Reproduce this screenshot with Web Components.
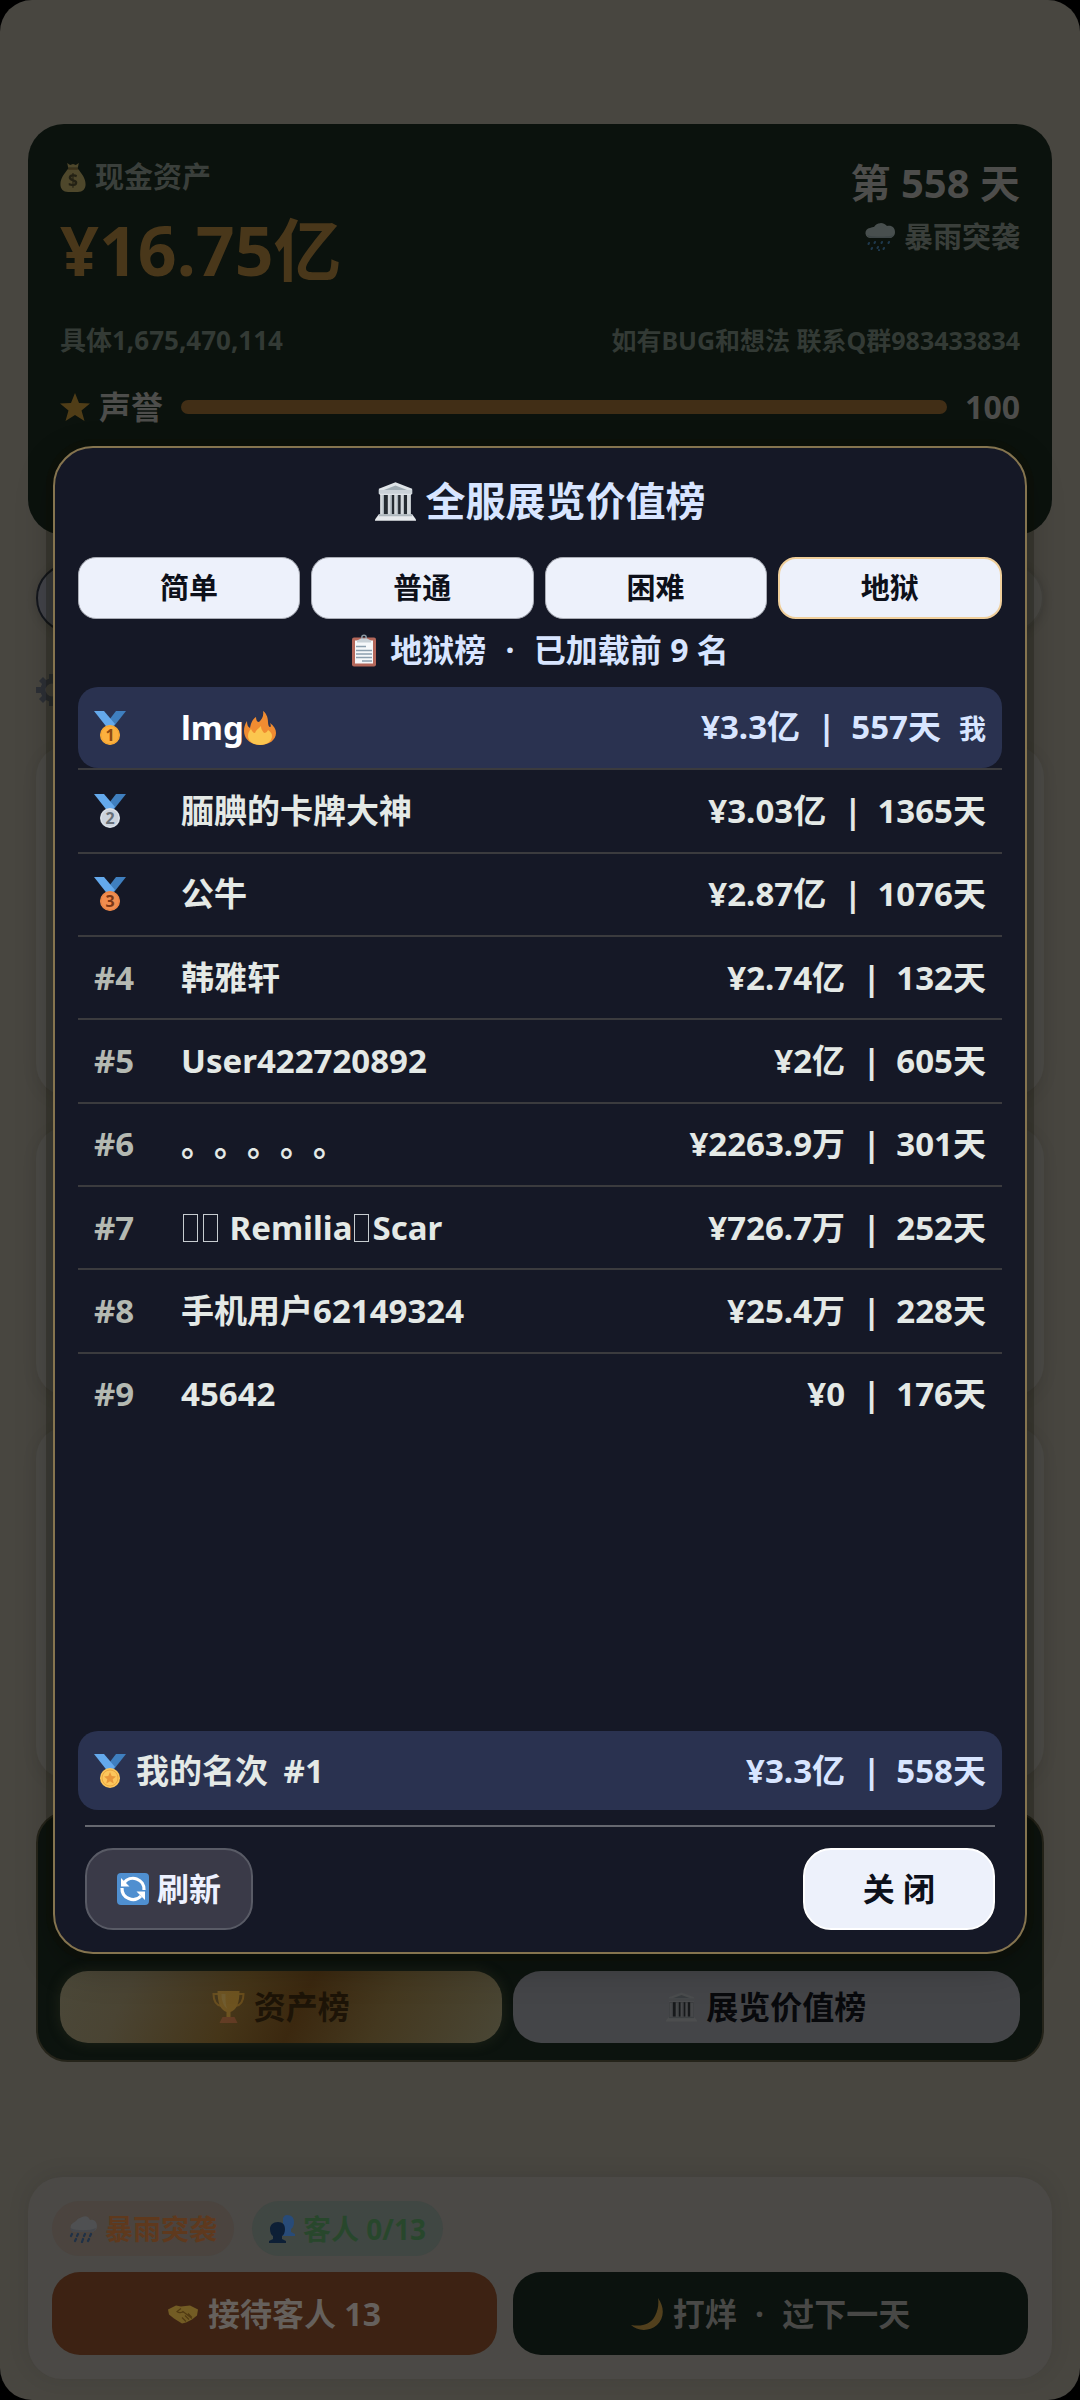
<!DOCTYPE html>
<html lang="zh-CN">
<head>
<meta charset="utf-8">
<meta name="viewport" content="width=device-width, initial-scale=1">
<title>全服展览价值榜</title>
<style>
  html { background: #000; }
  body { margin: 0; font-family: "Noto Sans", "Noto Sans CJK SC", sans-serif; font-weight: 700; text-spacing-trim: space-all; }
</style>
</head>
<body>
<game-app></game-app>

<script>
const MEDAL_RIBBON = `
  <path d="M32 0H22L12 13l5 6z" fill="#3f7fbf"/><path d="M0 0h10l11 13-6 6z" fill="#64a9ec"/>`;
const medal = (disc, rim, ink, n) => `<svg viewBox="0 0 32 34">${MEDAL_RIBBON}
  <circle cx="16" cy="24" r="10" fill="${disc}"/><circle cx="16" cy="24" r="9" fill="none" stroke="${rim}" stroke-width="1"/>
  <text x="16" y="30" text-anchor="middle" font-family="Noto Sans, sans-serif" font-weight="700" font-size="16" fill="${ink}">${n}</text></svg>`;

const ICONS = {
  gold: medal('#fbb03f', '#f7a42e', '#8d4a12', '1'),
  silver: medal('#ccd3dd', '#dfe4ea', '#687079', '2'),
  bronze: medal('#f18d4f', '#ea8243', '#7b3715', '3'),
  star_medal: `<svg viewBox="0 0 32 34">${MEDAL_RIBBON}<circle cx="16" cy="24" r="10" fill="#fcc65c"/><circle cx="16" cy="24" r="8" fill="none" stroke="#eba83f" stroke-width="1"/>
    <path d="M16 18l1.700 4 4.300.4-3.300 2.800 1 4.300-3.700-2.300-3.700 2.300 1-4.300-3.300-2.800 4.300-.4z" fill="#e8973a"/></svg>`,
  museum: `<svg viewBox="0 0 32 32"><path d="M16 1L3 6v4l1 1h24l1-1V6z" fill="#dfe4e8"/><path d="M16 3.500L7 7h18z" fill="#9fabb3"/><path d="M3 7h26v3H3z" fill="#cbd2d8"/>
    <path d="M4 11h24v16H4z" fill="#252b31"/><path d="M4 11h3v16H4zM10 11h3v16h-3zM15 11h3v16h-3zM20 11h2.500v16H20zM25 11h3v16h-3z" fill="#d3d8dc"/><path d="M6 11h1v16H6zM12 11h1v16h-1zM17 11h1v16h-1z" fill="#a8b1b8"/>
    <path d="M3 26h26l3 4v1H0v-1z" fill="#e6e9ec"/><path d="M3 26h26v1.500H3z" fill="#aeb7bd"/></svg>`,
  clipboard: `<svg viewBox="0 0 26 32"><rect x="1" y="3" width="24" height="29" rx="2" fill="#b4675a"/><path d="M4 6h18v23H4z" fill="#f6f8fa"/>
    <circle cx="13" cy="3" r="2.200" fill="none" stroke="#8a98a3" stroke-width="1.500"/><path d="M6 8V6l4-2h6l4 2v2z" fill="#c8d0d6"/>
    <path d="M5 12h10M5 16h16M5 19.500h16M5 23h16M11 26.500h10" stroke="#8c9fae" stroke-width="1.300"/></svg>`,
  fire: `<svg viewBox="0 0 32 34"><path d="M16 34C7 34 0 28 0 20c0-4 1-7 3-10 0 4 1 6 3 7C7 11 9 8 12 6c0 3 1 5 3 5 3-3 5-6 4-11 3 2 5 6 5 11 0 3 1 5 2 5 1 0 1-2 0-4 4 3 6 6 6 10 0 7-7 12-16 12z" fill="#f08c31"/>
    <path d="M16 34c-7 0-12-4-12-9 0-3 1-5 3-7 1 2 2 4 4 4 1-3 3-4 6-7 0 4 2 5 3 7 2 0 3-1 4-3 3 2 4 4 4 6 0 5-5 9-12 9z" fill="#fbc64f"/></svg>`,
  refresh: `<svg viewBox="0 0 32 32"><rect width="32" height="32" rx="4" fill="#4f8fd0"/><g fill="none" stroke="#fff" stroke-width="3.200"><path d="M7 10A11 11 0 0 1 27 17"/><path d="M5 15A11 11 0 0 0 24 23"/></g>
    <path d="M4 5v8.500h8.500zM28 27v-8.500h-8.500z" fill="#fff"/></svg>`,
  bag: `<svg viewBox="0 0 26 30"><path d="M7 0l3 2 3-1 3 1 3-2-1 5H8z" fill="#e8c070"/><path d="M8 6h10c4 5 8 10 8 16 0 5-3 8-8 8H8c-5 0-8-3-8-8C0 16 4 11 8 6z" fill="#e8c070"/><path d="M8 5h10v2H8z" fill="#a87838"/>
    <text x="13" y="25" text-anchor="middle" font-family="Noto Sans, sans-serif" font-size="18" fill="#5b4426">$</text></svg>`,
  rain: `<svg viewBox="0 0 30 28"><path d="M6 15a5 5 0 0 1-1-10c2-1 3-1 4-1a8 8 0 0 1 13-1c5-1 8 2 8 6 0 4-3 6-6 6z" fill="#d5dce4"/><path d="M6 15a5 5 0 0 1-4-3c5 2 22 2 27 0-1 2-3 3-5 3z" fill="#b3bfcc"/>
    <g stroke="#4a8fdd" stroke-width="2" stroke-linecap="round"><path d="M4 20l-.5 1M10 19l-.5 1M17 19l-.5 1M24 19l-.5 1M7 25l-.5 1M13 24l-.5 1M19 25l-.5 1M14 27v.5"/></g></svg>`,
  storm: `<svg viewBox="0 0 28 28"><path d="M5 17a5 5 0 0 1-1-9l3-2c2-3 4-3 6-4 4-2 7 0 8 3 4-1 7 2 7 6 0 4-3 6-6 6z" fill="#4f5052"/><path d="M5 17a5 5 0 0 1-4-4c6 3 20 3 26 0-1 3-3 4-5 4z" fill="#45474b"/>
    <g stroke="#1f3147" stroke-width="2.200" stroke-linecap="round"><path d="M3 19l-1 2M9 19l-1 2M16 19l-1 2M22 19l-1 2M7 24l-1 2M14 24l-1 3M20 24l-1 2"/></g></svg>`,
  star: `<svg viewBox="0 0 30 28"><path d="M15 0l4 10 11 .5-8.500 7L24.500 28 15 22l-9.500 6 3-10.500L0 10.500 11 10z" fill="#f0a030"/></svg>`,
  trophy: `<svg viewBox="0 0 32 34"><path d="M7 4H1c0 7 2 11 8 12M25 4h6c0 7-2 11-8 12" fill="none" stroke="#d99a2b" stroke-width="2"/><path d="M5 1h22c0 12-3 19-9 21v5h-4v-5C8 20 5 13 5 1z" fill="#eeb13a"/><path d="M9 4h4c0 7 0 12 2 15-4-3-6-8-6-15z" fill="#f8d676"/><path d="M10 27h12l3 6H7z" fill="#c0544a"/></svg>`,
  people: `<svg viewBox="0 0 26 28"><path d="M18 0c5 0 7 3 7 7 0 3-1 6-3 7v3l4 2v2H14V3c1-2 2-3 4-3z" fill="#284b78"/><path d="M9 7c5 0 7 3 7 7 0 3-1 6-3 7v3l4 2v2H0v-2l4-2v-3c-2-1-3-4-3-7 0-4 3-7 8-7z" fill="#0d1f36"/></svg>`,
  hands: `<svg viewBox="0 0 30 19"><path d="M0 5l8-4 5 1 9-1 8 4-1 6-5 4-6 3-4 1-8-5-5-4z" fill="#f0c04a"/><path d="M13 4l-4 3c2 2 5 1 6 0l9 7M18 17l-4-4M21 15l-4-4M24 13l-4-4" fill="none" stroke="#a87824" stroke-width="1.200"/></svg>`,
  moon: `<svg viewBox="0 0 32 32"><path d="M27 0c7 10 6 20-1 27C18 34 6 33 0 27c11 2 20-1 24-9 3-6 4-12 3-18z" fill="#f0bd55"/></svg>`,
  gear: `<svg viewBox="0 0 32 32"><circle cx="16" cy="16" r="9" fill="none" stroke="#2d3036" stroke-width="5"/>
    <path d="M13 0h6v5h-6zM13 27h6v5h-6zM0 13h5v6H0zM27 13h5v6h-5zM3 7l4-4 4 4-4 4zM21 7l4-4 4 4-4 4zM3 25l4-4 4 4-4 4zM21 25l4-4 4 4-4 4z" fill="#2d3036"/></svg>`
};

class BaseElement extends HTMLElement {
  constructor() {
    super();
    this.attachShadow({ mode: 'open' });
  }
  connectedCallback() {
    this.shadowRoot.innerHTML = `<style>*{box-sizing:border-box} button{font:inherit;margin:0;cursor:pointer}</style>` + this.render();
  }
}

/* <emoji-icon name w h> : picture glyph drawn as inline SVG */
customElements.define('emoji-icon', class extends BaseElement {
  render() {
    return `<style>:host{display:inline-flex;flex:none;width:${this.getAttribute('w')}px;height:${this.getAttribute('h')}px} svg{width:100%;height:100%;display:block}</style>${ICONS[this.getAttribute('name')]}`;
  }
});

/* Cash, day and reputation summary */
customElements.define('status-card', class extends BaseElement {
  render() {
    return `<style>
      :host{display:block;box-sizing:border-box;height:411px;padding:30px 32px;border-radius:36px;background:#0b120d;color:#3a3f3b}
      .row{display:flex;justify-content:space-between;white-space:nowrap}
      .line{display:flex;align-items:center;gap:9px}
      .label{font-size:29px;line-height:46px}
      .amount{font-size:68px;line-height:100px;color:#49371a}
      .side{display:flex;flex-direction:column;align-items:flex-end}
      .day{font-size:40px;line-height:58px;color:#4d4d4b}
      .weather{font-size:29px;line-height:50px}
      .small{margin-top:20px;font-size:25px;line-height:40px;color:#333a35}
      .exact{font-size:26px}
      .rep{margin-top:23px;display:flex;align-items:center;gap:18px;font-size:32px;line-height:48px;color:#4d4d4b}
      .track{flex:1;height:14px;border-radius:7px;background:#412e16}
      emoji-icon{opacity:.3}
    </style>
    <div class="row">
      <div><div class="line label"><emoji-icon name="bag" w="26" h="29"></emoji-icon>现金资产</div><div class="amount">¥16.75亿</div></div>
      <div class="side"><div class="day">第 558 天</div><div class="line weather"><emoji-icon name="rain" w="30" h="28"></emoji-icon>暴雨突袭</div></div>
    </div>
    <div class="row small"><span class="exact">具体1,675,470,114</span><span>如有BUG和想法 联系Q群983433834</span></div>
    <div class="rep"><span class="line"><emoji-icon name="star" w="30" h="28"></emoji-icon>声誉</span><div class="track"></div><span>100</span></div>`;
  }
});

/* Filter pill, settings heading and empty cards seen at the sides of the dialog */
customElements.define('shop-section', class extends BaseElement {
  render() {
    return `<style>
      :host{display:flex;flex-direction:column;padding:0 8px}
      .pills{display:flex;justify-content:space-between;height:70px}
      .pill{width:320px;border-radius:35px;border:2px solid #14171d;background:#43444a;box-shadow:0 2px 10px rgba(0,0,0,.15)}
      .pill.off{border-color:#43423d;background:#4a4945}
      .gear{margin:41px 0 39px}
      .card{border-radius:32px;background:#4b4a46;box-shadow:0 4px 16px rgba(0,0,0,.08)}
      .card + .card{margin-top:30px}
      .a{height:351px}.b{height:270px}.c{height:353px}
    </style>
    <div class="pills"><div class="pill"></div><div class="pill off"></div></div>
    <emoji-icon class="gear" name="gear" w="32" h="32"></emoji-icon>
    <div class="card a"></div><div class="card b"></div><div class="card c"></div>`;
  }
});

/* Entry panel for the two leaderboards */
customElements.define('board-panel', class extends BaseElement {
  render() {
    return `<style>
      :host{display:flex;box-sizing:border-box;align-items:flex-end;gap:11px;height:251px;margin:0 8px;padding:0 22px 17px;border-radius:32px;border:2px solid #25241a;background:#0c130e}
      button{display:flex;align-items:center;justify-content:center;gap:9px;height:72px;padding:0;border:0;border-radius:28px;font-size:32px;line-height:48px;white-space:nowrap}
      .gold{flex:442;color:#1d1407;background:linear-gradient(115deg,#4b4839 0%,#4a4433 16%,#453518 40%,#3b280f 54%,#44381f 72%,#4a4736 100%);box-shadow:0 0 14px rgba(80,80,50,.28)}
      .grey{flex:508;color:#08090c;background:#444548}
      emoji-icon{opacity:.24}
      .grey emoji-icon{filter:brightness(.34)}
      .grey emoji-icon{opacity:.8}
    </style>
    <button class="gold"><emoji-icon name="trophy" w="33" h="34"></emoji-icon>资产榜</button>
    <button class="grey"><emoji-icon name="museum" w="31" h="32"></emoji-icon>展览价值榜</button>`;
  }
});

/* Bottom bar: today's chips and the two main actions */
customElements.define('action-bar', class extends BaseElement {
  render() {
    return `<style>
      :host{display:block;box-sizing:border-box;height:202px;padding:24px;border-radius:34px;background:#4b4946;box-shadow:0 -2px 22px rgba(0,0,0,.09)}
      .chips{display:flex;gap:18px}
      .chip{display:flex;align-items:center;gap:8px;height:55px;padding:0 17px;border-radius:28px;font-size:28px;line-height:40px;white-space:nowrap}
      .storm{color:#5f391d;background:#4b443f}
      .guest{color:#28472c;background:#404743}
      .actions{display:flex;gap:16px;margin-top:16px}
      button{display:flex;align-items:center;justify-content:center;gap:10px;height:83px;padding:0;border:0;border-radius:28px;font-size:32px;line-height:48px;white-space:nowrap}
      .serve{flex:445;background:#3d2213;color:#65605c}
      .night{flex:515;background:#0b120e;color:#484846}
      .dot{margin:0 10px}
      .serve emoji-icon{filter:brightness(.48)}
      .night emoji-icon{filter:brightness(.34)}
    </style>
    <div class="chips"><span class="chip storm"><emoji-icon name="storm" w="28" h="28"></emoji-icon>暴雨突袭</span><span class="chip guest"><emoji-icon name="people" w="26" h="28"></emoji-icon>客人 0/13</span></div>
    <div class="actions">
      <button class="serve"><emoji-icon name="hands" w="30" h="20"></emoji-icon>接待客人 13</button>
      <button class="night"><emoji-icon name="moon" w="32" h="32"></emoji-icon><span>打烊 <span class="dot">·</span> 过下一天</span></button>
    </div>`;
  }
});

/* Difficulty switch */
customElements.define('tab-bar', class extends BaseElement {
  render() {
    const tabs = this.getAttribute('tabs').split(',');
    const active = this.getAttribute('active');
    return `<style>
      :host{display:flex;gap:11px}
      button{flex:1;height:62px;padding:0;border:1px solid #a9acb5;border-radius:18px;background:#edf1fb;color:#0d101a;font-size:29px;line-height:44px}
      button[aria-pressed="true"]{border:2px solid #f0cf9b}
    </style>` + tabs.map(t => `<button aria-pressed="${t === active}">${t}</button>`).join('');
  }
});

/* Ranking table */
const box = '<i class="box"></i>';
const ROWS = [
  ['gold', 'lmg<emoji-icon name="fire" w="32" h="34"></emoji-icon>', '¥3.3亿', '557天', true],
  ['silver', '腼腆的卡牌大神', '¥3.03亿', '1365天'],
  ['bronze', '公牛', '¥2.87亿', '1076天'],
  ['#4', '韩雅轩', '¥2.74亿', '132天'],
  ['#5', 'User422720892', '¥2亿', '605天'],
  ['#6', '。。。。。', '¥2263.9万', '301天'],
  ['#7', `${box}${box} Remilia${box}Scar`, '¥726.7万', '252天'],
  ['#8', '手机用户62149324', '¥25.4万', '228天'],
  ['#9', '45642', '¥0', '176天']
];
customElements.define('rank-table', class extends BaseElement {
  render() {
    const body = ROWS.map(([rank, name, value, days, me]) => `
      <tr class="${me ? 'me' : ''}">
        <td class="rank">${rank[0] === '#' ? rank : `<emoji-icon name="${rank}" w="32" h="34"></emoji-icon>`}</td>
        <td><div class="name">${name}</div></td>
        <td class="value">${value} <span class="bar">|</span> ${days}${me ? '<span class="tag">我</span>' : ''}</td>
      </tr>`).join('');
    return `<style>
      :host{display:block}
      table{width:100%;height:748px;border-collapse:separate;border-spacing:0;font-size:33px;line-height:48px;color:#e4e9e6;white-space:nowrap}
      td{padding:0;height:83px;vertical-align:middle}
      .rank{width:103px;padding-left:16px;color:#b4b9b2}
      .rank emoji-icon{display:flex}
      .name{display:flex;align-items:center;white-space:pre}
      .value{padding-right:16px;text-align:right}
      .bar{margin:0 7px 0 9px}
      .tag{margin-left:18px;font-size:27px}
      .box{width:15px;height:28px;margin:0 3px 0 2px;border:1px solid #c7ccd0}
      .me td{height:81px;background:#2a3250;color:#d8e5ff}
      .me .name{color:#fff}
      .me td:first-child{border-radius:20px 0 0 20px}
      .me td:last-child{border-radius:0 20px 20px 0}
      tr + tr td{border-top:2px solid #3b3b3e}
    </style><table><tbody>${body}</tbody></table>`;
  }
});

/* The player's own standing */
customElements.define('my-rank', class extends BaseElement {
  render() {
    return `<style>
      :host{display:flex;box-sizing:border-box;justify-content:space-between;align-items:center;height:79px;padding:0 16px;border-radius:20px;background:#2a3250;color:#e4e9e6;font-size:33px;line-height:48px;white-space:nowrap}
      .who{display:flex;align-items:center;gap:10px}
      .no{margin-left:7px}
      .value{color:#d8e5ff}
      .bar{margin:0 7px 0 9px}
    </style>
    <span class="who"><emoji-icon name="star_medal" w="32" h="34"></emoji-icon><span>我的名次 <span class="no">#1</span></span></span>
    <span class="value">¥3.3亿 <span class="bar">|</span> 558天</span>`;
  }
});

/* Dialog frame: heading, body slot, footer slot */
customElements.define('modal-dialog', class extends BaseElement {
  render() {
    return `<style>
      :host{display:flex;box-sizing:border-box;flex-direction:column;width:calc(100% - 106px);height:1508px;padding:23px 23px 22px;border:2px solid #85744f;border-radius:40px;background:#151826;box-shadow:0 0 0 7px rgba(14,14,4,.26),0 12px 36px rgba(0,0,0,.26);color:#d8e5ff}
      h2{display:flex;align-items:center;justify-content:center;gap:10px;margin:0 0 26px;font-size:40px;line-height:60px}
      .body{flex:1;display:flex;flex-direction:column}
      footer{display:flex;justify-content:space-between;margin:15px 7px 0;padding-top:21px;border-top:2px solid #666870}
    </style>
    <h2><slot name="icon"></slot><slot name="title"></slot></h2>
    <div class="body"><slot></slot></div>
    <footer><slot name="footer"></slot></footer>`;
  }
});

customElements.define('pill-button', class extends BaseElement {
  render() {
    return `<style>
      :host{display:block}
      button{display:flex;align-items:center;justify-content:center;gap:8px;height:82px;padding:0 30px;border:2px solid #595b66;border-radius:28px;background:#3a3a48;color:#edf1ff;font-size:32px;line-height:48px}
      :host([primary]) button{padding:0 58px;border-color:#fff;background:#edf1fb;color:#0d101a}
    </style><button><slot></slot></button>`;
  }
});

customElements.define('game-app', class extends BaseElement {
  render() {
    return `<style>
      :host{display:block;position:relative}
      main{display:flex;flex-direction:column;min-height:100vh;padding:124px 28px 21px;border-radius:32px;background:#484640}
      shop-section{margin-top:28px}
      board-panel{margin-top:32px}
      action-bar{margin-top:auto}
      .overlay{position:absolute;inset:0;display:grid;place-items:center}
      .caption{display:flex;align-items:center;justify-content:center;gap:13px;margin:7px 0 13px;font-size:32px;line-height:48px}
      .dot{margin:0 11px}
      my-rank{margin-top:auto}
    </style>
    <main>
      <status-card></status-card>
      <shop-section></shop-section>
      <board-panel></board-panel>
      <action-bar></action-bar>
    </main>
    <div class="overlay">
      <modal-dialog role="dialog">
        <emoji-icon slot="icon" name="museum" w="41" h="41"></emoji-icon>
        <span slot="title">全服展览价值榜</span>
        <tab-bar tabs="简单,普通,困难,地狱" active="地狱"></tab-bar>
        <div class="caption"><emoji-icon name="clipboard" w="26" h="33"></emoji-icon><span>地狱榜 <span class="dot">·</span> 已加载前 9 名</span></div>
        <rank-table></rank-table>
        <my-rank></my-rank>
        <pill-button slot="footer"><emoji-icon name="refresh" w="32" h="32"></emoji-icon>刷新</pill-button>
        <pill-button slot="footer" primary>关 闭</pill-button>
      </modal-dialog>
    </div>`;
  }
});
</script>
</body>
</html>
